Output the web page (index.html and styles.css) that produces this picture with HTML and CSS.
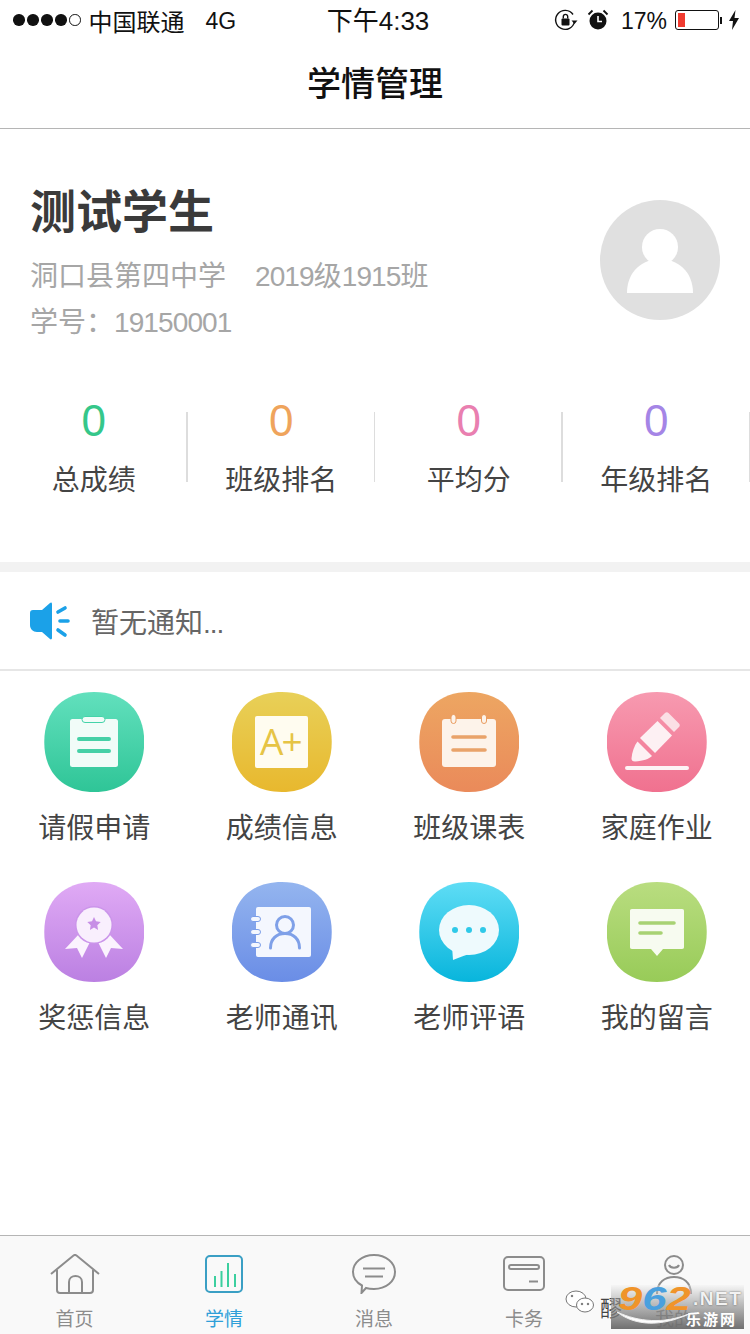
FILE: index.html
```html
<!DOCTYPE html>
<html lang="zh-CN">
<head>
    <meta charset="UTF-8">
    <meta name="viewport" content="width=device-width, initial-scale=1.0">
    <title>学情管理</title>
    <link rel="stylesheet" href="styles.css">
</head>
<body>
<div class="page">
    <div class="status-bar">
        <div class="status-left">
            <span class="signal"><i></i><i></i><i></i><i></i><i class="off"></i></span>
            <span class="carrier">中国联通</span>
            <span class="net">4G</span>
        </div>
        <div class="status-time">下午4:33</div>
        <div class="status-right">
            <svg class="ico-lock" width="24" height="24" viewBox="0 0 24 24">
                <path d="M20.5 13.5A9.5 9.5 0 1 1 19 6.5" fill="none" stroke="#111" stroke-width="1.4"/>
                <path d="M17.5 12.5h6l-3 3.5z" fill="#111"/>
                <rect x="7.5" y="10.5" width="8" height="7" rx="1" fill="#111"/>
                <path d="M9.3 10.5V8.6a2.2 2.2 0 0 1 4.4 0v1.9" fill="none" stroke="#111" stroke-width="1.4"/>
            </svg>
            <svg class="ico-alarm" width="22" height="24" viewBox="0 0 22 24">
                <circle cx="11" cy="13" r="8.5" fill="#111"/>
                <path d="M11 8v5.5h4" fill="none" stroke="#fff" stroke-width="1.6"/>
                <path d="M1.5 6.5 5.5 2.5M20.5 6.5l-4-4" stroke="#111" stroke-width="1.8"/>
            </svg>
            <span class="battery-pct">17%</span>
            <span class="battery"><span class="battery-level"></span></span>
            <span class="battery-tip"></span>
            <svg class="ico-bolt" width="10" height="20" viewBox="0 0 10 20"><path d="M6.5 0 0 11h4l-1 9 7-12H5.5z" fill="#111"/></svg>
        </div>
    </div>

    <div class="nav-bar">学情管理</div>

    <section class="profile">
        <div class="profile-top">
            <div class="profile-info">
                <h1 class="student-name">测试学生</h1>
                <div class="student-line">洞口县第四中学<span class="class-name"><span class="num">2019</span>级<span class="num">1915</span>班</span></div>
                <div class="student-line">学号：<span class="num">19150001</span></div>
            </div>
            <svg class="avatar" width="120" height="120" viewBox="0 0 120 120">
                <circle cx="60" cy="60" r="60" fill="#e0e0e0"/>
                <circle cx="60" cy="47" r="18" fill="#fff"/>
                <path d="M27 93c0-22 16-34 33-34s33 12 33 34z" fill="#fff"/>
            </svg>
        </div>
        <div class="stats">
            <div class="stat"><div class="stat-num c-green">0</div><div class="stat-label">总成绩</div></div>
            <div class="stat"><div class="stat-num c-orange">0</div><div class="stat-label">班级排名</div></div>
            <div class="stat"><div class="stat-num c-pink">0</div><div class="stat-label">平均分</div></div>
            <div class="stat"><div class="stat-num c-purple">0</div><div class="stat-label">年级排名</div></div>
        </div>
    </section>

    <div class="notice">
        <svg width="40" height="40" viewBox="0 0 40 40">
            <path d="M3 9h9l8-7c1-1 2-.5 2 1v34c0 1-1 2-2 1l-8-7H7c-4 0-7-3-7-7V12c0-2 1-3 3-3z" fill="#1ba1e8"/>
            <path d="M28 11l7-4M30 20h8M28 29l7 5" fill="none" stroke="#1ba1e8" stroke-width="3.600" stroke-linecap="round"/>
        </svg>
        <span class="notice-text">暂无通知<span class="dots">...</span></span>
    </div>

    <div class="menu">
        <div class="menu-item">
            <div class="tile t-green">
                <svg width="100" height="100" viewBox="0 0 100 100">
                    <rect x="26" y="27" width="48" height="48" rx="2.500" fill="#f1fcf8"/>
                    <rect x="38" y="24.500" width="23" height="6" rx="3" fill="#f1fcf8" stroke="#45d3a9" stroke-width="1"/>
                    <path d="M35 47h30M35 59h30" stroke="#45d0a6" stroke-width="4" stroke-linecap="round"/>
                </svg>
            </div>
            <div class="menu-label">请假申请</div>
        </div>
        <div class="menu-item">
            <div class="tile t-yellow">
                <svg width="100" height="100" viewBox="0 0 100 100">
                    <rect x="23" y="24" width="53" height="52" rx="2" fill="#fffcf0"/>
                    <text class="tile-text" x="28" y="63" font-size="37" fill="#e6c445">A+</text>
                </svg>
            </div>
            <div class="menu-label">成绩信息</div>
        </div>
        <div class="menu-item">
            <div class="tile t-orange">
                <svg width="100" height="100" viewBox="0 0 100 100">
                    <rect x="23" y="27" width="54" height="48" rx="3" fill="#fdf3ea"/>
                    <rect x="32" y="22.500" width="5" height="9" rx="2.500" fill="#fdf3ea" stroke="#e99b5f"/>
                    <rect x="62.500" y="22.500" width="5" height="9" rx="2.500" fill="#fdf3ea" stroke="#e99b5f"/>
                    <path d="M34 45h32M34 58h32" stroke="#e9a36a" stroke-width="3.600" stroke-linecap="round"/>
                </svg>
            </div>
            <div class="menu-label">班级课表</div>
        </div>
        <div class="menu-item">
            <div class="tile t-pink">
                <svg width="100" height="100" viewBox="0 0 100 100">
                    <path d="M53 26l5-5c1-1 2.500-1 3.500 0L72 31.500c1 1 1 2.500 0 3.500l-5 5z" fill="#fbdfe5"/>
                    <path d="M50.500 29 65 43.500 48 61 33 46z" fill="#fdf0f3"/>
                    <path d="M30.500 49.500 45 64c-3 3-9 5-17 5.500-2.500 0-3.500-1-3.500-3 .5-7 3-13 6-17z" fill="#fdf0f3"/>
                    <path d="M20 76h60" stroke="#fdf3f5" stroke-width="4" stroke-linecap="round"/>
                </svg>
            </div>
            <div class="menu-label">家庭作业</div>
        </div>
        <div class="menu-item">
            <div class="tile t-purple">
                <svg width="100" height="100" viewBox="0 0 100 100">
                    <path d="M21 67 36 51l10 9-8 16-5-10zM79 67 64 51l-10 9 8 16 5-10z" fill="#fbf3fe"/>
                    <circle cx="50" cy="43" r="19" fill="#cb95ea"/>
                    <circle cx="50" cy="43" r="17.500" fill="#f9effd"/>
                    <path d="m50 35 2 4.300 4.700.6-3.400 3.300.8 4.700-4.100-2.300-4.100 2.300.8-4.700-3.400-3.300 4.700-.6z" fill="#c78fe6"/>
                </svg>
            </div>
            <div class="menu-label">奖惩信息</div>
        </div>
        <div class="menu-item">
            <div class="tile t-blue">
                <svg width="100" height="100" viewBox="0 0 100 100">
                    <rect x="24" y="25" width="55" height="50" rx="2" fill="#f4f7fe"/>
                    <g fill="#f4f7fe" stroke="#7c9ee8" stroke-width="1">
                        <rect x="18.500" y="34.500" width="10" height="5" rx="2.500"/>
                        <rect x="18.500" y="47.500" width="10" height="5" rx="2.500"/>
                        <rect x="18.500" y="60.500" width="10" height="5" rx="2.500"/>
                    </g>
                    <circle cx="53" cy="43" r="8.500" fill="none" stroke="#7fa0e8" stroke-width="3"/>
                    <path d="M38.500 66c0-9 6-14.500 14.500-14.500S67.500 57 67.500 66" fill="none" stroke="#7fa0e8" stroke-width="3" stroke-linecap="round"/>
                </svg>
            </div>
            <div class="menu-label">老师通讯</div>
        </div>
        <div class="menu-item">
            <div class="tile t-cyan">
                <svg width="100" height="100" viewBox="0 0 100 100">
                    <ellipse cx="50" cy="48" rx="30" ry="25" fill="#eefafd"/>
                    <path d="M33 64 34 78c8-3 14-6 22-7z" fill="#eefafd"/>
                    <g fill="#2fc9e8"><circle cx="36" cy="48" r="3"/><circle cx="50" cy="48" r="3"/><circle cx="64" cy="48" r="3"/></g>
                </svg>
            </div>
            <div class="menu-label">老师评语</div>
        </div>
        <div class="menu-item">
            <div class="tile t-lime">
                <svg width="100" height="100" viewBox="0 0 100 100">
                    <path d="M25 27h50c1.500 0 2 .8 2 2v36c0 1.200-.5 2-2 2H56l-6 7-6-7H25c-1.500 0-2-.8-2-2V29c0-1.200.5-2 2-2z" fill="#f7fbf0"/>
                    <path d="M33 41h34M33 51h21" stroke="#a8d273" stroke-width="3.600" stroke-linecap="round"/>
                </svg>
            </div>
            <div class="menu-label">我的留言</div>
        </div>
    </div>

    <div class="tab-bar">
        <div class="tab">
            <svg width="50" height="40" viewBox="0 0 50 40" fill="none" stroke="#8c8c8c" stroke-width="2">
                <path d="M1 20 23.500 1.500c1-.7 2-.7 3 0L49 20"/>
                <path d="M7 16v20c0 2 1 3 3 3h30c2 0 3-1 3-3V16"/>
                <path d="M19 39V28c0-8 13-8 13 0v11"/>
            </svg>
            <div class="tab-label">首页</div>
        </div>
        <div class="tab tab-active">
            <svg width="38" height="40" viewBox="0 0 38 40" fill="none">
                <rect x="1" y="2" width="36" height="36" rx="4" stroke="#3a9fc4" stroke-width="2"/>
                <path d="M10 33V22M16.500 33V17M23 33V9M30 33V20" stroke="#3ccf9f" stroke-width="2"/>
            </svg>
            <div class="tab-label">学情</div>
        </div>
        <div class="tab">
            <svg width="44" height="40" viewBox="0 0 44 40" fill="none" stroke="#8c8c8c" stroke-width="2">
                <path d="M22 1c12 0 21 7.500 21 17s-9 17-21 17c-3 0-6-.4-8-1l-4.500 5 .5-7.500C4.500 28.500 1 23.500 1 18 1 8.500 10 1 22 1z"/>
                <path d="M11 14.500h22M13 22.500h18"/>
            </svg>
            <div class="tab-label">消息</div>
        </div>
        <div class="tab">
            <svg width="44" height="40" viewBox="0 0 44 40" fill="none" stroke="#8c8c8c" stroke-width="2">
                <rect x="2" y="3" width="40" height="33" rx="4"/>
                <rect x="7" y="11" width="30" height="4" rx="2"/>
                <path d="M27 27.500h9"/>
            </svg>
            <div class="tab-label">卡务</div>
        </div>
        <div class="tab">
            <svg width="44" height="40" viewBox="0 0 44 40" fill="none" stroke="#8c8c8c" stroke-width="2">
                <circle cx="22" cy="11" r="9"/>
                <path d="M17 11c1.500 3.500 8.500 3.500 10 0"/>
                <path d="M5 40c0-12 8-17 17-17s17 5 17 17"/>
            </svg>
            <div class="tab-label">我的</div>
        </div>

        <div class="watermark">
            <svg class="wm-wechat" width="30" height="24" viewBox="0 0 30 24" fill="#fff" stroke="#777" stroke-width="1">
                <ellipse cx="11" cy="9" rx="10" ry="8"/>
                <ellipse cx="20" cy="15" rx="8.500" ry="7"/>
                <circle cx="7" cy="6" r=".8" fill="#333"/>
                <circle cx="17" cy="14" r=".8" fill="#333"/>
                <circle cx="23" cy="14" r=".8" fill="#333"/>
            </svg>
            <span class="wm-name">醪</span>
            <div class="wm-plate">
                <svg class="wm-swoosh" width="133" height="44" viewBox="0 0 133 44">
                    <path d="M6 27c18 14 44 15 72 2-26 10-50 8-72-2z" fill="#fff" stroke="#eee"/>
                </svg>
                <div class="wm-top">
                    <span class="wm-digits"><span class="wm-o">9</span><span class="wm-b">6</span><span class="wm-o">2</span></span>
                    <span class="wm-net">.NET</span>
                </div>
                <div class="wm-sub">乐游网</div>
            </div>
        </div>
    </div>
</div>
</body>
</html>
```

FILE: styles.css
```css
* {
    box-sizing: border-box;
}

body {
    margin: 0;
    background: #fff;
    font-family: "Liberation Sans", "Noto Sans CJK SC", sans-serif;
}

.page {
    width: 750px;
    height: 1334px;
    display: flex;
    flex-direction: column;
    overflow: hidden;
}

/* status bar */
.status-bar {
    height: 40px;
    display: flex;
    align-items: center;
    color: #111;
    font-size: 24px;
}

.status-left,
.status-right {
    flex: 1;
    display: flex;
    align-items: center;
}

.status-left {
    padding-left: 13px;
}

.status-right {
    justify-content: flex-end;
    padding-right: 11px;
}

.signal {
    display: flex;
    gap: 2.500px;
    margin-right: 8px;
}

.signal i {
    width: 11.500px;
    height: 11.500px;
    border-radius: 50%;
    background: #111;
}

.signal i.off {
    background: #fff;
    border: 1px solid #111;
}

.net {
    margin-left: 21px;
    padding-top: 3px;
    font-size: 23px;
}

.status-time {
    font-size: 26px;
    padding-left: 4px;
    padding-bottom: 3px;
}

.ico-lock {
    margin-right: 9px;
}

.ico-alarm {
    margin-right: 12px;
}

.battery-pct {
    padding-top: 2px;
    margin-right: 8px;
    font-size: 23px;
}

.battery {
    width: 44px;
    height: 20px;
    padding: 2px;
    border: 1px solid #111;
    border-radius: 3px;
    display: flex;
}

.battery-level {
    width: 7px;
    background: #f03b30;
}

.battery-tip {
    width: 2px;
    height: 7px;
    margin-left: 1px;
    margin-right: 7px;
    background: #111;
}

/* title */
.nav-bar {
    height: 89px;
    display: flex;
    align-items: center;
    justify-content: center;
    padding-bottom: 6px;
    border-bottom: 1px solid #b5b5b5;
    color: #111;
    font-size: 34px;
    font-weight: 500;
}

/* profile */
.profile {
    height: 433px;
    padding-top: 53px;
}

.profile-top {
    display: flex;
    justify-content: space-between;
    padding: 0 30px;
}

.student-name {
    margin: 0 0 12px;
    color: #3a3a3a;
    font-size: 46px;
    font-weight: 700;
    line-height: 60px;
}

.student-line {
    color: #a6a6a6;
    font-size: 28px;
    line-height: 46px;
}

.num {
    letter-spacing: -.9px;
}

.class-name {
    margin-left: 29px;
}

.avatar {
    margin-top: 18px;
}

.stats {
    display: flex;
    margin-top: 45px;
}

.stat {
    width: 187.5px;
    text-align: center;
    background: linear-gradient(#ddd, #ddd) 186px 21px / 2px 70px no-repeat;
}

.stat-num {
    font-size: 44px;
    line-height: 60px;
}

.stat-label {
    margin-top: 10px;
    color: #444;
    font-size: 28px;
    line-height: 40px;
}

.c-green { color: #35c78a; }
.c-orange { color: #efa45c; }
.c-pink { color: #e97fb0; }
.c-purple { color: #a585e6; }

/* notice */
.notice {
    height: 109px;
    display: flex;
    align-items: center;
    gap: 21px;
    padding-left: 30px;
    border-top: 10px solid #f2f2f2;
    border-bottom: 2px solid #e6e6e6;
}

.notice-text {
    color: #666;
    font-size: 28px;
}

.dots {
    letter-spacing: -1px;
}

/* menu grid */
.menu {
    display: grid;
    grid-template-columns: repeat(4, 187.5px);
    row-gap: 33px;
    padding-top: 21px;
    padding-left: .5px;
}

.menu-item {
    display: flex;
    flex-direction: column;
    align-items: center;
    gap: 17px;
}

.tile {
    width: 100px;
    height: 100px;
    clip-path: path("M50 0C80 0 100 18 100 50C100 82 80 100 50 100C20 100 0 82 0 50C0 18 20 0 50 0Z");
}

.tile svg {
    display: block;
}

.tile-text {
    font-family: "Open Sans", sans-serif;
    font-weight: 500;
    letter-spacing: -2px;
}

.t-green { background: linear-gradient(#62e0bd, #2fc597); }
.t-yellow { background: linear-gradient(#e8d058, #e8b82e); }
.t-orange { background: linear-gradient(#eda662, #ea8a5a); }
.t-pink { background: linear-gradient(#f79ab0, #f0718f); }
.t-purple { background: linear-gradient(#e0aaf5, #bb80e2); }
.t-blue { background: linear-gradient(#94b5ef, #6a8de6); }
.t-cyan { background: linear-gradient(#5fddf5, #08b5dc); }
.t-lime { background: linear-gradient(#b9dd80, #98cb58); }

.menu-label {
    color: #444;
    font-size: 28px;
    line-height: 40px;
}

/* tabs */
.tab-bar {
    position: relative;
    height: 99px;
    margin-top: auto;
    display: flex;
    background: #f9f9f9;
    border-top: 1px solid #b5b5b5;
}

.tab {
    width: 150px;
    padding-top: 18px;
    display: flex;
    flex-direction: column;
    align-items: center;
}

.tab:first-child {
    width: 149px;
}

.tab svg {
    display: block;
}

.tab-label {
    margin-top: 12px;
    color: #8c8c8c;
    font-size: 19px;
    line-height: 28px;
}

.tab-active .tab-label {
    color: #2f9fd8;
}

/* watermark over the last tab */
.watermark {
    position: absolute;
    left: 565px;
    top: 49px;
    width: 179px;
    height: 44px;
    display: flex;
    align-items: flex-start;
}

.wm-wechat {
    margin-top: 5px;
}

.wm-name {
    margin-top: 5px;
    margin-left: 5px;
    color: #444;
    font-size: 22px;
}

.wm-plate {
    position: absolute;
    left: 46px;
    top: 0;
    width: 133px;
    height: 44px;
    background: linear-gradient(rgba(240, 240, 240, .35), rgba(105, 105, 105, .95));
}

.wm-swoosh {
    position: absolute;
    left: 0;
    top: 0;
}

.wm-top {
    position: relative;
    display: flex;
    align-items: center;
    height: 28px;
    padding-left: 7px;
    font-weight: 700;
}

.wm-digits {
    width: 74px;
    font-size: 33px;
    font-style: italic;
    transform: scaleX(1.32);
    transform-origin: left center;
    white-space: nowrap;
}

.wm-o { color: #f0942a; }
.wm-b { color: #4aa0de; }

.wm-net {
    margin-left: 1px;
    color: #f2f2f2;
    font-size: 19px;
    letter-spacing: 1.500px;
    text-shadow: 0 0 2px #555;
}

.wm-sub {
    position: relative;
    padding-right: 7px;
    color: #fff;
    font-size: 15px;
    font-weight: 700;
    line-height: 14px;
    letter-spacing: 2px;
    text-align: right;
}
```
